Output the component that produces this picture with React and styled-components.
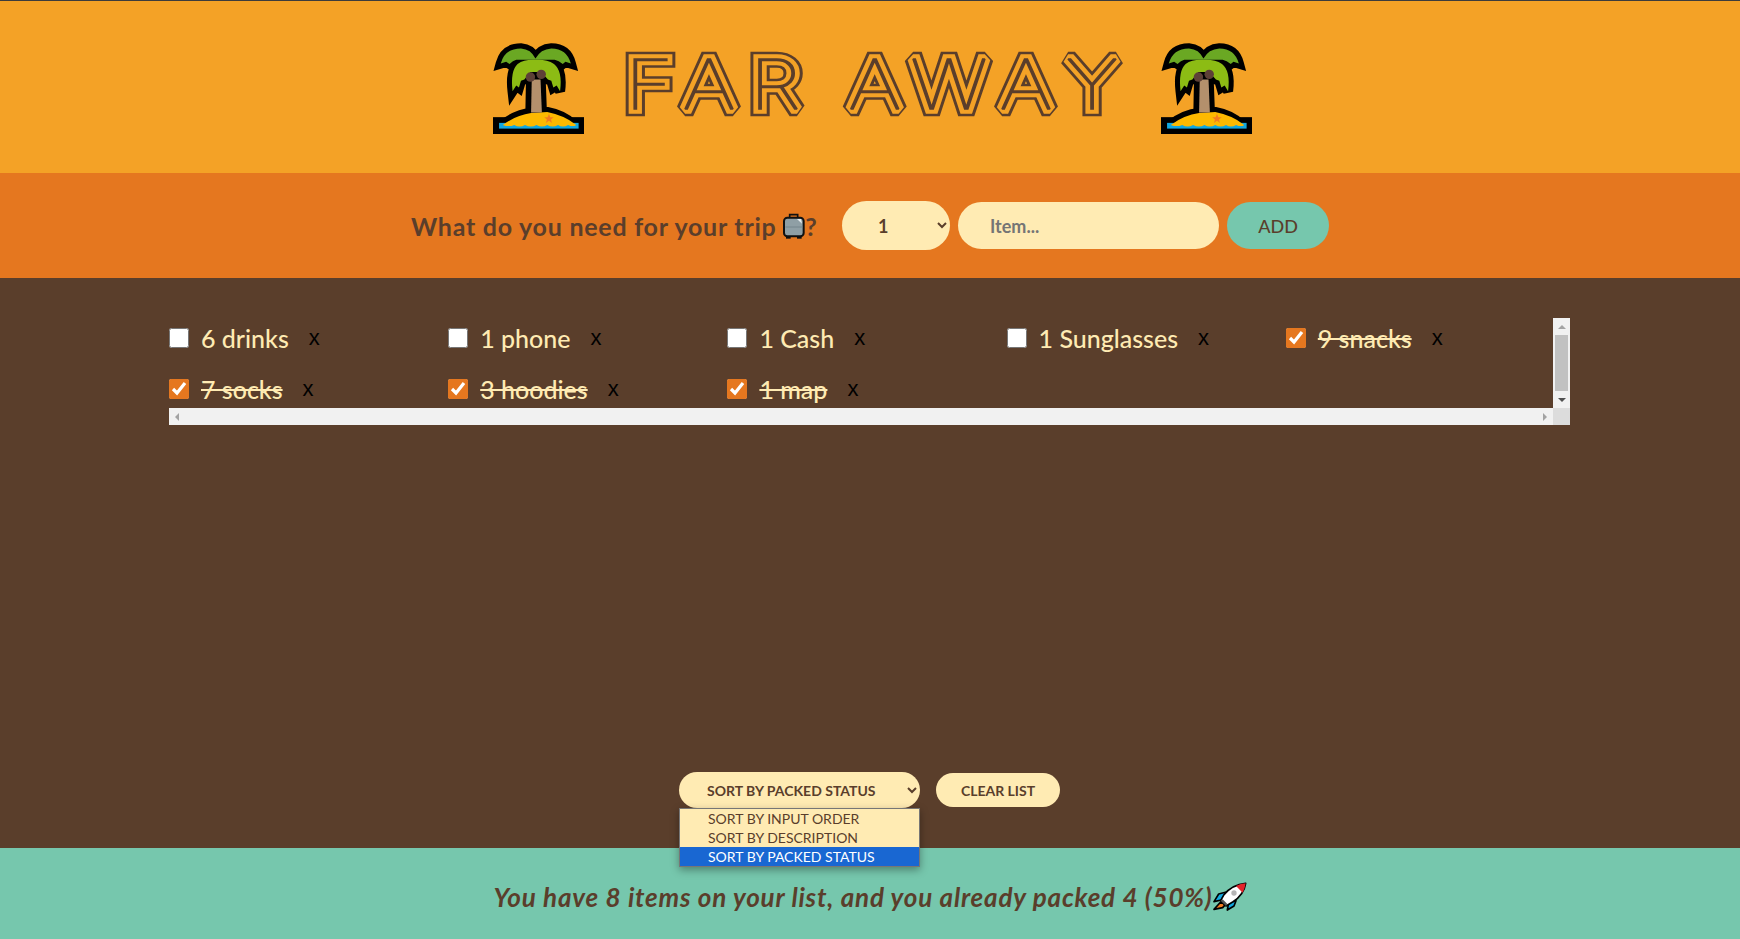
import React from 'react'
import styled, { createGlobalStyle } from 'styled-components'

const GlobalStyle = createGlobalStyle`
    * {
        box-sizing: border-box;
        margin: 0;
        padding: 0;
    }
    body {
        font-family: "Lato", "Open Sans", sans-serif;
        font-size: 24px;
        color: #5a3e2b;
    }
`

const AppShell = styled.div`
    width: 100%;
    height: 100vh;
    display: grid;
    grid-template-rows: 172px 105px 1fr 91px;
    border-top: 1px solid #3c3c3c;
`

const Header = styled.header`
    background: #f4a226;
    display: flex;
    justify-content: center;
    align-items: center;
    gap: 41px;
    padding: 2px 0 0 5px;
`

const Title = styled.h1`
    display: flex;
    width: 495px;
    height: 66px;
    font-family: "Inter", sans-serif;
    font-size: 69px;
    font-weight: 100;
`

const TitleArt = styled.svg`
    overflow: visible;
`

const TitleLayer = styled.use`
    fill: ${props => props.$color};
    stroke: ${props => props.$color};
    stroke-width: ${props => props.$width}px;
    stroke-linejoin: miter;
    stroke-miterlimit: 1.6;
    vector-effect: non-scaling-stroke;
`

const AddForm = styled.form`
    background: #e5771f;
    display: flex;
    justify-content: center;
    align-items: center;
    gap: 8px;
`

const Question = styled.h3`
    display: flex;
    align-items: center;
    width: 407px;
    margin-right: 16px;
    font-size: 25px;
    font-weight: 700;
    letter-spacing: 0.75px;
    white-space: pre;
`

const QtySelect = styled.select`
    width: 108px;
    height: 49px;
    padding: 0 32px;
    border: none;
    border-radius: 100px;
    background: #ffebb3;
    color: #5a3e2b;
    font-family: inherit;
    font-size: 18px;
    font-weight: 700;
`

const ItemInput = styled.input`
    width: 261px;
    height: 47px;
    padding: 0 32px;
    border: none;
    border-radius: 100px;
    background: #ffebb3;
    color: #5a3e2b;
    font-family: inherit;
    font-size: 18px;
    font-weight: 700;
`

const AddButton = styled.button`
    width: 102px;
    height: 47px;
    border: none;
    border-radius: 100px;
    background: #76c7ad;
    color: #5a3e2b;
    font-family: inherit;
    font-size: 18px;
    font-weight: 500;
`

const ListSection = styled.main`
    background: #5a3e2b;
    color: #ffebb3;
    padding: 40px 0;
    display: flex;
    flex-direction: column;
    justify-content: space-between;
    align-items: center;
`

const ScrollFrame = styled.div`
    width: 1401px;
    margin-left: -1px;
    display: grid;
    grid-template-columns: 1fr 17px;
    grid-template-rows: 90px 17px;
`

const PackingList = styled.ul`
    list-style: none;
    overflow: hidden;
    display: grid;
    grid-template-columns: repeat(5, 1fr);
    gap: 11px 12px;
    align-content: start;
`

const VerticalBar = styled.div`
    background: #f1f1f1;
    display: grid;
    grid-template-rows: 17px 1fr 17px;
    justify-items: center;
    align-items: center;
`

const VerticalThumb = styled.div`
    width: 13px;
    height: 100%;
    background: #c1c1c1;
`

const HorizontalBar = styled.div`
    background: #f1f1f1;
    display: flex;
    justify-content: space-between;
    align-items: center;
    padding: 0 6px;
`

const ScrollCorner = styled.div`
    background: #dcdcdc;
`

const ArrowUpDown = styled.span`
    width: 0;
    height: 0;
    border-left: 4px solid transparent;
    border-right: 4px solid transparent;
    border-top: ${props => (props.$down ? '4px solid #505050' : 'none')};
    border-bottom: ${props => (props.$down ? 'none' : '4px solid #a3a3a3')};
`

const ArrowLeftRight = styled.span`
    width: 0;
    height: 0;
    border-top: 4px solid transparent;
    border-bottom: 4px solid transparent;
    border-left: ${props => (props.$right ? '4px solid #a3a3a3' : 'none')};
    border-right: ${props => (props.$right ? 'none' : '4px solid #a3a3a3')};
`

const Row = styled.li`
    display: flex;
    align-items: center;
    gap: 12px;
    height: 40px;
`

const Check = styled.input`
    width: 20px;
    height: 20px;
    accent-color: #e5771f;
`

const ItemLabel = styled.span`
    font-size: 25px;
    font-weight: 500;
    white-space: nowrap;
    text-decoration: ${props => (props.$packed ? 'line-through' : 'none')};
`

const RemoveButton = styled.button`
    background: none;
    border: none;
    padding: 8px;
    font-family: "Liberation Sans", sans-serif;
    font-size: 22px;
    line-height: 22px;
    color: #000;
`

const Actions = styled.div`
    display: flex;
    align-items: center;
    gap: 16px;
    padding-right: 1px;
`

const SortWrap = styled.div`
    position: relative;
`

const SortSelect = styled.select`
    display: block;
    width: 241px;
    height: 36px;
    padding: 0 24px;
    border: none;
    border-radius: 100px;
    background: #ffebb3;
    color: #5a3e2b;
    font-family: inherit;
    font-size: 14px;
    font-weight: 700;
    text-transform: uppercase;
`

const SortMenu = styled.div`
    position: absolute;
    left: 0;
    top: 36px;
    z-index: 2;
    width: 241px;
    border: 1px solid #767676;
    background: #ffebb3;
    box-shadow: 0 3px 8px rgba(0, 0, 0, 0.35);
`

const SortOption = styled.div`
    height: 19px;
    line-height: 19px;
    padding-left: 28px;
    font-size: 14px;
    font-weight: 400;
    white-space: nowrap;
    text-transform: uppercase;
    background: ${props => (props.$selected ? '#1967d2' : 'transparent')};
    color: ${props => (props.$selected ? '#ffffff' : '#5a3e2b')};
`

const ClearButton = styled.button`
    width: 124px;
    height: 34px;
    border: none;
    border-radius: 100px;
    background: #ffebb3;
    color: #5a3e2b;
    font-family: inherit;
    font-size: 14px;
    font-weight: 700;
    text-transform: uppercase;
`

const Stats = styled.footer`
    background: #76c7ad;
    display: flex;
    justify-content: center;
    align-items: center;
    padding-top: 6px;
    font-size: 26px;
    font-weight: 700;
    font-style: italic;
    letter-spacing: 0.8px;
    white-space: pre;
`

function PalmIcon() {
    const upper = 'M62 103 Q74 58 122 58 Q152 60 165 88 Q180 60 212 58 Q258 58 270 103 L254 98 L246 104 L234 96 L222 92 L108 92 L98 96 L88 104 L78 98 Z'
    const lower = 'M165 92 Q132 90 112 104 Q90 124 97 185 L108 168 L116 174 L122 154 L132 150 L150 128 L182 128 L202 150 L212 154 L218 174 L228 168 L238 185 Q246 124 220 104 Q198 90 165 92 Z'
    return (
        <svg width="91" height="91" viewBox="39 42 270 270">
            <rect x="39" y="262" width="270" height="50" fill="#000" />
            <g fill="#000" stroke="#000" strokeWidth="30" strokeLinejoin="miter" strokeMiterlimit="3">
                <path d={upper} />
                <path d={lower} />
                <path d="M152 140 L180 140 L184 248 L150 248 Z" />
                <path d="M70 284 Q108 254 152 250 L200 247 Q248 256 276 284 Z" />
            </g>
            <rect x="57" y="279" width="236" height="17" fill="#12a8e0" />
            <path d="M68 285 Q108 256 152 250 L200 247 Q248 256 286 285 Q276 292 262 285 Q246 294 232 285 Q216 294 200 285 Q184 294 168 285 Q152 294 134 285 Q118 294 102 285 Q86 292 68 285 Z" fill="#fdb900" />
            <path d="M205 252 L209 262 L219 262 L211 269 L214 279 L205 273 L196 279 L199 269 L191 262 L201 262 Z" fill="#f47c20" />
            <path d="M154 150 L180 150 L184 248 L152 248 Z" fill="#b4906c" />
            <path d={upper} fill="#6aa823" />
            <path d={lower} fill="#8cbc14" />
            <circle cx="150" cy="143" r="14" fill="#5d4037" />
            <circle cx="182" cy="135" r="14" fill="#5d4037" />
        </svg>
    )
}

function LuggageIcon() {
    return (
        <svg width="22" height="26" viewBox="38 28 66 78">
            <path d="M58 42 V33 H82 V42" fill="none" stroke="#111" strokeWidth="5" />
            <rect x="47" y="96" width="14" height="9" fill="#111" />
            <rect x="80" y="96" width="14" height="9" fill="#111" />
            <rect x="41" y="42" width="59" height="56" rx="10" fill="#8f9fa5" stroke="#111" strokeWidth="6" />
            <path d="M45 70 H96" stroke="#74858c" strokeWidth="3" />
            <path d="M80 46 L92 46 L95 60 Z" fill="#e8eef0" />
        </svg>
    )
}

function RocketIcon() {
    return (
        <svg width="34" height="29" viewBox="345 40 102 87">
            <path d="M385 70 L362 76 L348 99 L370 94 Z" fill="#12a8e0" stroke="#000" strokeWidth="5" strokeLinejoin="round" />
            <path d="M414 96 L408 112 L388 124 L392 102 Z" fill="#12a8e0" stroke="#000" strokeWidth="5" strokeLinejoin="round" />
            <path d="M368 100 L348 122 L374 117 L382 108 Z" fill="#f47c20" stroke="#000" strokeWidth="5" strokeLinejoin="round" />
            <path d="M443 44 Q402 48 378 78 L368 96 L384 112 L404 100 Q438 78 443 44 Z" fill="#fff" stroke="#000" strokeWidth="5" strokeLinejoin="round" />
            <path d="M443 44 Q428 45 414 52 L434 72 Q441 58 443 44 Z" fill="#e3242b" />
            <path d="M374 92 L388 106 L384 112 L368 96 Z" fill="#555" />
            <circle cx="408" cy="73" r="8" fill="#b5b5b5" />
        </svg>
    )
}

const items = [
    { id: 1, label: '6 drinks' },
    { id: 2, label: '1 phone' },
    { id: 3, label: '1 Cash' },
    { id: 4, label: '1 Sunglasses' },
    { id: 5, label: '9 snacks', packed: true },
    { id: 6, label: '7 socks', packed: true },
    { id: 7, label: '3 hoodies', packed: true },
    { id: 8, label: '1 map', packed: true },
]

const sortOptions = ['Sort by input order', 'Sort by description', 'Sort by packed status']

function App() {
    return (
        <>
            <GlobalStyle />
            <AppShell>
                <Header>
                    <PalmIcon />
                    <Title>
                        <TitleArt width="495" height="66" viewBox="0 0 495 66">
                            <defs>
                                <text id="far-away" transform="scale(1.2 1)" y="53.5" x="0 48 104 160 186 238 312 367">FAR AWAY</text>
                            </defs>
                            <TitleLayer href="#far-away" $color="#5a3e2b" $width={14.5} />
                            <TitleLayer href="#far-away" $color="#f4a226" $width={9.5} />
                            <TitleLayer href="#far-away" $color="#5a3e2b" $width={1.6} />
                        </TitleArt>
                    </Title>
                    <PalmIcon />
                </Header>

                <AddForm>
                    <Question>What do you need for your trip <LuggageIcon />?</Question>
                    <QtySelect defaultValue="1">
                        {[1, 2, 3, 4, 5].map(n => <option key={n}>{n}</option>)}
                    </QtySelect>
                    <ItemInput placeholder="Item..." />
                    <AddButton type="button">ADD</AddButton>
                </AddForm>

                <ListSection>
                    <ScrollFrame>
                        <PackingList>
                            {items.map(item => (
                                <Row key={item.id}>
                                    <Check type="checkbox" defaultChecked={!!item.packed} />
                                    <ItemLabel $packed={item.packed}>{item.label}</ItemLabel>
                                    <RemoveButton type="button">x</RemoveButton>
                                </Row>
                            ))}
                        </PackingList>
                        <VerticalBar>
                            <ArrowUpDown />
                            <VerticalThumb />
                            <ArrowUpDown $down />
                        </VerticalBar>
                        <HorizontalBar>
                            <ArrowLeftRight />
                            <ArrowLeftRight $right />
                        </HorizontalBar>
                        <ScrollCorner />
                    </ScrollFrame>

                    <Actions>
                        <SortWrap>
                            <SortSelect defaultValue={sortOptions[2]}>
                                {sortOptions.map(o => <option key={o}>{o}</option>)}
                            </SortSelect>
                            <SortMenu>
                                {sortOptions.map((o, i) => (
                                    <SortOption key={o} $selected={i === 2}>{o}</SortOption>
                                ))}
                            </SortMenu>
                        </SortWrap>
                        <ClearButton type="button">Clear list</ClearButton>
                    </Actions>
                </ListSection>

                <Stats>You have 8 items on your list, and you already packed 4 (50%)<RocketIcon /></Stats>
            </AppShell>
        </>
    )
}

export default App
